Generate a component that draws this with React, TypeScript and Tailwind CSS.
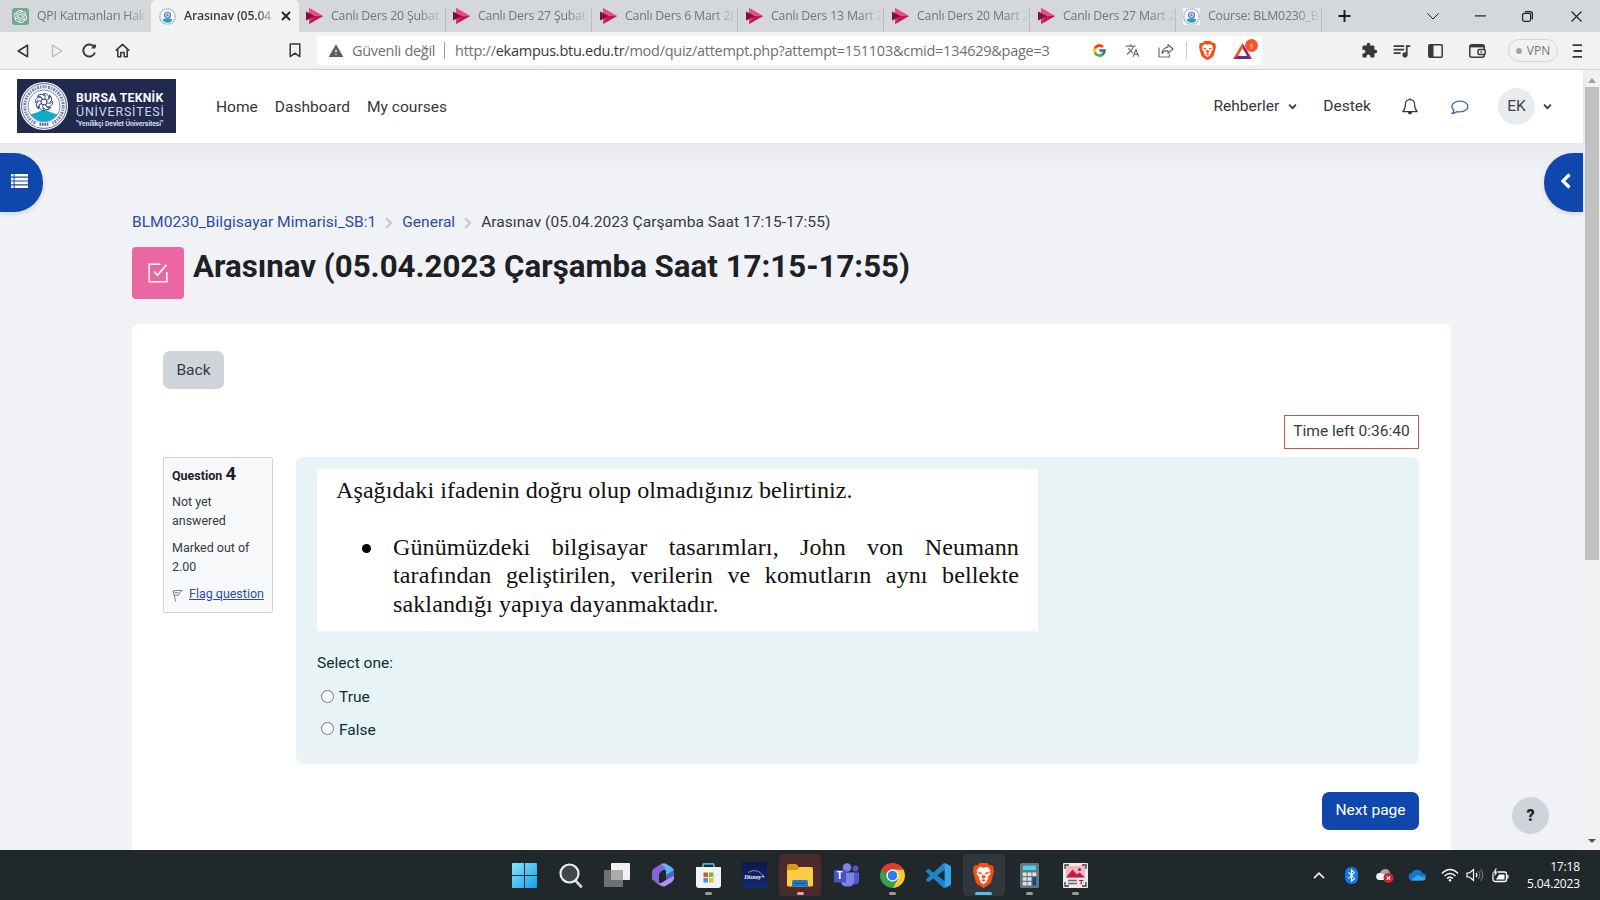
import type { ReactNode } from 'react';
import { FcGoogle } from 'react-icons/fc';
import { SiOpenai } from 'react-icons/si';
import { MdExtension, MdQueueMusic, MdTranslate, MdWarning } from 'react-icons/md';

const SHIELD =
  'M15.68 0l2.096 2.38s1.84-.512 2.709.358c.868.87 1.584 1.638 1.584 1.638l-.562 1.381.715 2.047s-2.104 7.98-2.35 8.955c-.486 1.919-.818 2.66-2.198 3.633-1.38.972-3.884 2.66-4.293 2.916-.409.256-.92.692-1.38.692-.46 0-.97-.436-1.38-.692a185.796 185.796 0 01-4.293-2.916c-1.38-.973-1.712-1.714-2.197-3.633-.247-.975-2.351-8.955-2.351-8.955l.715-2.047-.562-1.381s.716-.768 1.585-1.638c.868-.87 2.708-.358 2.708-.358L8.321 0h7.36z';

function BraveIcon({ className }: { className: string }) {
  return (
    <svg viewBox="1.8 0 20.4 24" preserveAspectRatio="none" className={className}>
      <path d={SHIELD} fill="#fb4d16" />
      <path d="M8.2 3.7 12 4.6l3.8-.9 3 3.6-.8 1.6.8 1.5-2.7 3.2.5 1.6-1.4 1.7.1 1.2-3.3 2.2-3.3-2.2.1-1.2-1.4-1.7.5-1.6-2.7-3.2.8-1.5-.8-1.6z" fill="#fff" />
      <path d="m7 8.5 3.7 1-.8 1.6-3-1.3zm10 0-3.7 1 .8 1.6 3-1.3zM11 11.5l-1.2 2.3L12 15l2.2-1.2-1.2-2.3M9.6 16.4l2.4-.9 2.4.9-2.4 1.5z" fill="#fb4d16" />
    </svg>
  );
}

function Seal({ className }: { className: string }) {
  return (
    <svg viewBox="0 0 48 48" preserveAspectRatio="none" className={className}>
      <defs>
        <clipPath id="seal-clip">
          <circle cx="24" cy="24" r="15.6" />
        </clipPath>
      </defs>
      <circle cx="24" cy="24" r="24" fill="#f6f8fc" />
      <circle cx="24" cy="24" r="22.4" fill="none" stroke="#3b4b8a" strokeWidth=".8" />
      <circle cx="24" cy="24" r="19.2" fill="none" stroke="#7380b0" strokeWidth="3" strokeDasharray="1.3 1.2 2 1" pathLength="120" strokeDashoffset="2" />
      <circle cx="24" cy="24" r="16" fill="#fff" stroke="#4f5f99" strokeWidth=".7" />
      <g clipPath="url(#seal-clip)">
        <path d="M6 33q8-1 12-3 4-2 6-2t6 2q4 2 12 3v10H6z" fill="#10a9c6" />
      </g>
      <path d="M16 40h16v5H16z" fill="#f6f8fc" />
      <path d="M19.500 42.300h9" stroke="#5161a0" strokeWidth="3" strokeDasharray="1.600 .8" />
      <g fill="none" stroke="#34468c" strokeWidth="1">
        {[0, 45, 90, 135, 180, 225, 270, 315].map((a) => (
          <path key={a} d="M24 17.600c2-1.500 1.600-4.600-.6-6.200 3.400-.4 5.600 2 5.200 5" transform={`rotate(${a} 24 20)`} />
        ))}
        <circle cx="24" cy="20" r="3" />
      </g>
    </svg>
  );
}

function SmallSeal() {
  return (
    <svg viewBox="0 0 17 17" className="h-[17px] w-[17px] shrink-0">
      <rect width="17" height="17" fill="#eef3fa" />
      <circle cx="8.5" cy="8.5" r="7.6" fill="#fff" stroke="#8fa3d0" strokeWidth="1.3" strokeDasharray="1.4 .7" />
      <circle cx="8.5" cy="7" r="3" fill="#c9d6ef" stroke="#5b7ab8" strokeWidth="1.2" />
      <circle cx="8.5" cy="7" r="1" fill="#5b7ab8" />
      <path d="M3.6 11.4q5-2.2 9.8 0-1.5 3.2-4.9 3.3-3.300-.1-4.900-3.300z" fill="#1ca5c4" />
    </svg>
  );
}

function StreamIcon() {
  return (
    <svg viewBox="0 0 17 16" className="h-4 w-[17px] shrink-0">
      <path d="M3 0 17 8 3 16z" fill="#e23a70" />
      <path d="M3 16 17 8H8z" fill="#c2184f" />
      <path d="M0 3.500 9 8l-9 4.500z" fill="#7d1238" />
      <path d="M3 0 17 8H9L3 5z" fill="#ea4c80" />
    </svg>
  );
}

function Chevron({ className }: { className: string }) {
  return (
    <svg viewBox="0 0 10 10" className={className} fill="none" stroke="currentColor" strokeWidth="2">
      <path d="m1.200 3 3.800 3.800L8.800 3" />
    </svg>
  );
}

function Crumb() {
  return (
    <svg viewBox="0 0 8 12" className="mt-px h-3 w-2 text-[#c3c8cd]" fill="none" stroke="currentColor" strokeWidth="2.200">
      <path d="m1.200 1.200 4.800 4.800-4.800 4.800" />
    </svg>
  );
}

const tabs = [
  { title: 'QPI Katmanları Hak', kind: 'chat', box: 'w-[151px] pl-3' },
  { title: 'Arasınav (05.04', kind: 'seal', box: 'w-[148px] pl-2' },
  { title: 'Canlı Ders 20 Şubat', kind: 'stream', box: 'w-[147px] pl-[7px]' },
  { title: 'Canlı Ders 27 Şubat', kind: 'stream', box: 'w-[146px] pl-[7px]' },
  { title: 'Canlı Ders 6 Mart 2(', kind: 'stream', box: 'w-[146px] pl-[8px]' },
  { title: 'Canlı Ders 13 Mart 2', kind: 'stream', box: 'w-[146px] pl-[8px]' },
  { title: 'Canlı Ders 20 Mart 2', kind: 'stream', box: 'w-[146px] pl-[8px]' },
  { title: 'Canlı Ders 27 Mart 2', kind: 'stream', box: 'w-[146px] pl-[8px]' },
  { title: 'Course: BLM0230_B', kind: 'seal', box: 'w-[146px] pl-[7px]' },
];

function TabStrip() {
  return (
    <div className="flex h-8 shrink-0 bg-[#d4d8da] text-[12.300px] tracking-[-0.200px] text-[#707578]">
      {tabs.map((t, i) => (
        <div
          key={t.title}
          className={`flex shrink-0 items-center ${t.box} ${i === 1 ? 'rounded-t-[5px] bg-[#f2f2f2] font-semibold text-[#3b3e42]' : ''}`}
        >
          {t.kind === 'chat' && (
            <span className="flex h-[17px] w-[17px] shrink-0 items-center justify-center rounded-[3px] bg-[#74a892] text-white">
              <SiOpenai className="h-[13px] w-[13px]" />
            </span>
          )}
          {t.kind === 'seal' && <SmallSeal />}
          {t.kind === 'stream' && <StreamIcon />}
          <span
            className={`ml-[8px] whitespace-nowrap ${i === 1 ? 'w-[88px] [mask-image:linear-gradient(to_right,black_72px,transparent_92px)]' : 'w-[112px] [mask-image:linear-gradient(to_right,black_88px,transparent_113px)]'}`}
          >
            {t.title}
          </span>
          {i === 1 && (
            <svg viewBox="0 0 10 10" className="ml-[9px] h-[10px] w-[10px]" stroke="#222" strokeWidth="1.800">
              <path d="m1 1 8 8M9 1 1 9" />
            </svg>
          )}
          {i > 1 && <span className="ml-auto mt-2 h-6 w-px shrink-0 bg-[#b9bec1]" />}
        </div>
      ))}
      <div className="flex flex-1 items-center text-[#1f1f1f]">
        <svg viewBox="0 0 12 12" className="ml-[16px] h-3 w-[13px]" stroke="currentColor" strokeWidth="2">
          <path d="M6 0v12M0 6h12" />
        </svg>
        <svg viewBox="0 0 12 7" className="ml-[76px] h-[7px] w-3" fill="none" stroke="currentColor">
          <path d="m.5.5 5.500 5.500L11.500.5" />
        </svg>
        <svg viewBox="0 0 11 2" className="ml-9 h-[2px] w-[11px]" fill="currentColor">
          <path d="M0 .3h11v1.200H0z" />
        </svg>
        <svg viewBox="0 0 11 11" className="ml-9 h-[11px] w-[11px]" fill="none" stroke="currentColor" strokeWidth="1.200">
          <rect x=".6" y="2.300" width="8" height="8" rx="1.500" />
          <path d="M2.800.6h5.400q2.200 0 2.200 2.200v5.400" />
        </svg>
        <svg viewBox="0 0 11 11" className="ml-[38px] h-[11px] w-[11px]" stroke="currentColor" strokeWidth="1.100">
          <path d="m.5.5 10 10M10.500.5l-10 10" />
        </svg>
      </div>
    </div>
  );
}

function Toolbar() {
  return (
    <div className="flex h-[38px] shrink-0 items-center border-b border-[#d5d7d9] bg-[#f2f2f2] text-[#36393d]">
      <svg viewBox="0 0 12 14" className="ml-[17px] h-[14px] w-3" fill="none" stroke="currentColor" strokeWidth="1.600" strokeLinejoin="round">
        <path d="M10.500 1.200v11.600L1.200 7z" />
      </svg>
      <svg viewBox="0 0 12 14" className="ml-[22px] h-[14px] w-3 text-[#b9bcbf]" fill="none" stroke="currentColor" strokeWidth="1.400" strokeLinejoin="round">
        <path d="M1.500 1.200v11.600L10.800 7z" />
      </svg>
      <svg viewBox="0 0 15 15" className="ml-[19px] h-[15px] w-[15px]" fill="none" stroke="currentColor" strokeWidth="1.900">
        <path d="M13 9.500A6 6 0 1 1 11.500 3.200" />
        <circle cx="12.500" cy="3" r="1.600" fill="currentColor" stroke="none" />
        <path d="M13.400 1v4.500H9z" fill="currentColor" stroke="none" />
      </svg>
      <svg viewBox="0 0 15 15" className="ml-[18px] h-[15px] w-[15px]" fill="none" stroke="currentColor" strokeWidth="1.600" strokeLinejoin="round">
        <path d="M.8 7.600 7.500 1.400l6.700 6.200M2.800 6.500v7.200h3V9.500h3.400v4.200h3V6.500" />
      </svg>
      <svg viewBox="0 0 12 15" className="ml-[159px] h-[15px] w-3" fill="none" stroke="currentColor" strokeWidth="1.500" strokeLinejoin="round">
        <path d="M1.200 1h9.600v12.600L6 10.200l-4.800 3.400z" />
      </svg>
      <div className="ml-4 flex h-[29px] w-[945px] shrink-0 items-center rounded-[3px] bg-white text-[14.500px] text-[#6c7073]">
        <MdWarning className="ml-[11px] h-[16px] w-[16px] text-[#5a5e62]" />
        <span className="ml-[8px] w-[83px] whitespace-nowrap tracking-[-0.300px]">Güvenli değil</span>
        <span className="ml-[9px] h-[17px] w-px bg-[#999]" />
        <span className="ml-[10px] w-[600px] whitespace-nowrap tracking-[-0.260px]">
          http://<span className="text-[#37393c]">ekampus.btu.edu.tr</span>/mod/quiz/attempt.php?attempt=151103&amp;cmid=134629&amp;page=3
        </span>
        <FcGoogle className="ml-[37px] h-[15px] w-[15px]" />
        <MdTranslate className="ml-[18px] h-[15px] w-[15px]" />
        <svg viewBox="0 0 16 15" className="ml-[18px] h-[15px] w-4" fill="none" stroke="currentColor" strokeWidth="1.200" strokeLinejoin="round">
          <path d="M1 4.500v9.500h10.500v-3" />
          <path d="M10 1.500 15 6l-5 4.300V7.700Q5.800 7.500 4 10.500q.3-5.600 6-6.400z" />
        </svg>
        <span className="ml-[12px] h-[17px] w-px bg-[#ccc]" />
        <BraveIcon className="ml-[12px] h-[19px] w-[17px]" />
        <span className="relative ml-[17px] h-[19px] w-6">
          <svg viewBox="0 0 19 16" className="h-[18px] w-[19px] pt-[2px]">
            <path d="M9.500 0 0 16h5.500l4-10z" fill="#ff4b12" />
            <path d="M9.500 0 19 16l-5.500-3.300L9.500 6z" fill="#9e1f63" />
            <path d="M0 16h19l-4.500-3.300h-9z" fill="#662d91" />
            <path d="m9.500 5.300 4.500 7.500H5z" fill="#fff" />
          </svg>
          <span className="absolute -top-[2px] left-[12px] flex h-[13px] w-[13px] items-center justify-center rounded-full bg-[#fb542b] text-[8px] leading-none text-white">1</span>
        </span>
      </div>
      <MdExtension className="ml-[99px] h-[17px] w-[17px]" />
      <MdQueueMusic className="ml-[13px] h-[21px] w-[21px]" />
      <svg viewBox="0 0 15 14" className="ml-[16px] h-[14px] w-[15px]">
        <rect x=".8" y=".8" width="13.400" height="12.400" rx="1" fill="none" stroke="currentColor" strokeWidth="1.500" />
        <path d="M1 1h4.500v12H1z" fill="currentColor" />
      </svg>
      <svg viewBox="0 0 17 14" className="ml-[26px] h-[14px] w-[17px]" fill="none" stroke="currentColor" strokeWidth="1.500">
        <rect x=".8" y=".8" width="14.500" height="12.400" rx="2" />
        <path d="M1 2.200h14" strokeWidth="2.400" />
        <rect x="9" y="5.500" width="7.200" height="5" rx="1.500" fill="#f2f2f2" />
        <path d="M11.500 8h1.500" />
      </svg>
      <span className="ml-[22px] flex h-[23px] w-[50px] items-center justify-center gap-[5px] rounded-full border border-[#d3d5d8] text-[12px] text-[#73777b]">
        <span className="h-[6px] w-[6px] rounded-full bg-[#a0a3b5]" />
        VPN
      </span>
      <svg viewBox="0 0 10 14" className="ml-[14px] h-[14px] w-[10px]" fill="none" stroke="currentColor" strokeWidth="1.800">
        <path d="M.5 1.200H10M1.500 7H10M.5 12.800H10" />
      </svg>
    </div>
  );
}

function SiteNav() {
  return (
    <header className="flex h-[73px] shrink-0 items-start bg-white pl-[17px] text-[15.550px] leading-[24px] text-[#33383d] shadow-[0_2px_8px_rgba(0,0,0,0.080)]">
      <div className="mt-[9px] flex h-[54px] w-[159px] items-start bg-[#21294f]">
        <Seal className="ml-[3px] mt-[3px] h-[48px] w-[48px] shrink-0" />
        <div className="ml-[8px] mt-[13px] flex flex-col whitespace-nowrap text-white">
          <span className="text-[12.200px] font-bold leading-[13px] tracking-[0.280px]">BURSA TEKNİK</span>
          <span className="text-[12.400px] leading-[13px] tracking-[0.850px] text-[#cfd6ea]">ÜNİVERSİTESİ</span>
          <span className="mt-px text-[6.800px] font-bold leading-[10px] tracking-[-0.060px] text-[#d8ddec]">"Yenilikçi Devlet Üniversitesi"</span>
        </div>
      </div>
      <nav className="ml-10 mt-[24.500px] flex gap-[17px]">
        <span>Home</span>
        <span>Dashboard</span>
        <span>My courses</span>
      </nav>
      <div className="ml-auto mr-[31px] flex h-[72px] items-center">
        <span>Rehberler</span>
        <Chevron className="ml-[9px] h-[9px] w-[9px]" />
        <span className="ml-[26px]">Destek</span>
        <svg viewBox="0 0 16 17" className="ml-[31px] h-[17px] w-4" fill="none" stroke="currentColor" strokeWidth="1.200" strokeLinejoin="round">
          <path d="M8 1.600c-3 0-4.600 2-4.600 4.800 0 4-1 5.600-2.600 7.200h14.400c-1.600-1.600-2.600-3.200-2.600-7.200 0-2.800-1.600-4.800-4.600-4.800zM8 .2v1.600" />
          <path d="M6.500 14.300a1.500 1.500 0 0 0 3 0z" fill="currentColor" />
        </svg>
        <svg viewBox="1 0 17 15.500" preserveAspectRatio="none" className="ml-[33px] mt-[2px] h-[15px] w-[18px] text-[#3a66bf]" fill="none" stroke="currentColor" strokeWidth="1.300" strokeLinejoin="round">
          <path d="M9.500 1.200c4.300 0 7.500 2.300 7.500 5.500s-3.200 5.500-7.500 5.500c-1 0-1.800-.1-2.600-.3-1.500 1.400-3 2-5 2.200 1.200-1 1.700-2 1.800-3.400C2.500 9.700 1.800 8.300 1.800 6.700c0-3.200 3.400-5.500 7.700-5.500z" />
        </svg>
        <span className="ml-[29px] flex h-[37px] w-[37px] items-center justify-center rounded-full bg-[#e9ecef] text-[#3f454b]">EK</span>
        <Chevron className="ml-[8px] h-[9px] w-[9px]" />
      </div>
    </header>
  );
}

function QuestionInfo() {
  return (
    <div className="flex h-[156px] w-[110px] shrink-0 flex-col rounded-[2px] border border-[#ced4da] bg-[#f8f9fb] pl-2 pt-[4px] text-[12.480px] text-[#343a40]">
      <h3 className="whitespace-nowrap text-[12.480px] font-bold leading-[24px] text-[#1d2125]">
        Question <span className="text-[18.500px]">4</span>
      </h3>
      <p className="mt-[4px] leading-[19px]">Not yet<br />answered</p>
      <p className="mt-[9px] leading-[18.500px]">Marked out of<br />2.00</p>
      <p className="mt-[8px] flex items-center whitespace-nowrap leading-[19px]">
        <svg viewBox="0 0 11 13" className="mt-[3px] h-[13px] w-[11px]" fill="none" stroke="#777c80">
          <path d="m1 2 2.700 10.500M1 2q4-1 9-.5Q7.500 3.500 6.300 6.300 4 5.800 2.400 6.500M2.500 3.800l4-.300" />
        </svg>
        <a className="ml-[6px] text-[#2a4ba5] underline">Flag question</a>
      </p>
    </div>
  );
}

function Radio({ label }: { label: string }) {
  return (
    <label className="flex h-[32.600px] items-start">
      <span className="mt-[4.500px] h-[13px] w-[13px] rounded-full border border-[#767676] bg-white" />
      <span className="ml-[5px] leading-[24px]">{label}</span>
    </label>
  );
}

function QuestionBody() {
  return (
    <div className="ml-[23px] flex h-[307px] flex-1 flex-col rounded-[7px] bg-[#e7f3f5] pl-[21px] pt-3 text-[#0f2d33]">
      <div className="h-[162px] w-[721px] bg-white pl-[19px] pt-[6.500px] font-['Liberation_Serif',serif] text-[24.100px] text-[#111]">
        <p className="whitespace-nowrap leading-[28px] tracking-[0.050px]">Aşağıdaki ifadenin doğru olup olmadığınız belirtiniz.</p>
        <div className="mt-[29px] flex">
          <span className="ml-[26px] mt-[11px] h-[9px] w-[9px] shrink-0 rounded-full bg-black" />
          <div className="ml-[22px] w-[626px] leading-[28px] tracking-[0.080px]">
            <p className="h-[28px] whitespace-nowrap [text-align-last:justify]">Günümüzdeki bilgisayar tasarımları, John von Neumann</p>
            <p className="h-[29px] whitespace-nowrap [text-align-last:justify]">tarafından geliştirilen, verilerin ve komutların aynı bellekte</p>
            <p className="h-[28px] whitespace-nowrap">saklandığı yapıya dayanmaktadır.</p>
          </div>
        </div>
      </div>
      <p className="mt-[20px] leading-[24px]">Select one:</p>
      <div className="ml-[4px] mt-[10px] flex flex-col">
        <Radio label="True" />
        <Radio label="False" />
      </div>
    </div>
  );
}

function Page() {
  return (
    <main className="flex min-h-0 flex-1 flex-col overflow-hidden bg-[linear-gradient(#e9eaee,#f0f2f6_32px)] pl-[132px] pr-[132px] text-[15.550px]">
      <div className="mt-[67px] flex h-6 items-center whitespace-nowrap leading-6 text-[#2a4ba5]">
        <a className="tracking-[0.030px]">BLM0230_Bilgisayar Mimarisi_SB:1</a>
        <span className="ml-[9px] mr-[9px]"><Crumb /></span>
        <a>General</a>
        <span className="ml-[9px] mr-[9px]"><Crumb /></span>
        <span className="tracking-[0.020px] text-[#343a40]">Arasınav (05.04.2023 Çarşamba Saat 17:15-17:55)</span>
      </div>
      <div className="mt-[13px] flex h-[52px]">
        <span className="flex h-[52px] w-[52px] items-center justify-center rounded-[4px] bg-[#eb66a2]">
          <svg viewBox="0 0 20 20" className="h-5 w-5" fill="none" stroke="#fff" strokeWidth="1.500">
            <path d="M12.500 1.200H1.200v17.600h17.600V9" />
            <path d="m6 8.500 3.500 3.800 9-10.500" strokeWidth="1.700" />
          </svg>
        </span>
        <h1 className="ml-[9px] whitespace-nowrap text-[31.250px] font-bold leading-[39px] text-[#1d2125]">
          Arasınav (05.04.2023 Çarşamba Saat 17:15-17:55)
        </h1>
      </div>
      <section className="mt-[25px] flex flex-1 flex-col rounded-t-[7px] bg-white px-8 pl-[31px] pt-[27px] text-[#343a40]">
        <button className="h-[38px] w-[61px] rounded-[7px] bg-[#ced4da] pt-px">Back</button>
        <div className="mt-[26px] flex h-[34px] w-[135px] items-center justify-center self-end whitespace-nowrap border border-[#b8483c]/90">
          Time left 0:36:40
        </div>
        <div className="mt-[8px] flex">
          <QuestionInfo />
          <QuestionBody />
        </div>
        <button className="mt-[28px] h-[38px] w-[97px] self-end whitespace-nowrap rounded-[7px] bg-[#0f47ad] text-white">Next page</button>
      </section>
    </main>
  );
}

function Scrollbar() {
  return (
    <div className="flex w-[17px] shrink-0 flex-col items-center bg-[#f1f1f1] text-[#505050]">
      <svg viewBox="0 0 8 5" className="mt-[8px] h-[5px] w-2"><path d="M0 5 4 0l4 5z" fill="#a3a3a3" /></svg>
      <div className="mt-[4px] h-[473px] w-[14px] bg-[#c1c1c1]" />
      <svg viewBox="0 0 8 4" className="mb-[7px] mt-auto h-1 w-2"><path d="m0 0 4 4 4-4z" fill="currentColor" /></svg>
    </div>
  );
}

function Slot({ children, dot, box }: { children: ReactNode; dot?: string; box?: string }) {
  return (
    <div className={`relative flex h-[42px] w-[42px] shrink-0 items-center justify-center rounded-[4px] ${box ?? ''}`}>
      {children}
      {dot && <span className={`absolute bottom-[1px] h-[3px] rounded-full ${dot}`} />}
    </div>
  );
}

const GREY = 'w-[7px] bg-[#9a9c9d]';

function Taskbar() {
  return (
    <footer className="flex h-[50px] shrink-0 items-start bg-[#20282b] pl-[504px] pt-1 text-white">
      <div className="flex gap-[3.900px]">
        <Slot>
          <svg viewBox="0 0 25 25" className="mr-[2px] h-[25px] w-[25px]">
            <defs>
              <linearGradient id="win" x1="0" y1="0" x2="1" y2="1"><stop stopColor="#8ae4ff" /><stop offset="1" stopColor="#139fe8" /></linearGradient>
            </defs>
            <path d="M1 0h11v12H0V1q0-1 1-1zM13 0h11q1 0 1 1v11H13zM0 13h12v12H1q-1 0-1-1zM13 13h12v11q0 1-1 1H13z" fill="url(#win)" />
          </svg>
        </Slot>
        <Slot>
          <svg viewBox="0 0 24 25" className="h-[25px] w-6">
            <path d="m15.500 16.500 6.500 7" stroke="#d0d1d2" strokeWidth="2.800" strokeLinecap="round" />
            <circle cx="10.500" cy="10.500" r="9" fill="#434648" stroke="#eee" strokeWidth="2.200" />
          </svg>
        </Slot>
        <Slot>
          <svg viewBox="0 0 26 24" className="h-6 w-[26px]">
            <rect x="7" width="19" height="17" rx="1" fill="#f1f1f1" />
            <rect y="7" width="19" height="17" rx="1" fill="#6e7072" />
            <path d="M7 7h12v10H7z" fill="#a9abac" />
          </svg>
        </Slot>
        <Slot>
          <svg viewBox="0 0 24 25" className="h-[25px] w-6">
            <path d="M10 1q3-1.500 5.500 0L21 4.500q2 1.300 2 3.500v8.500L15 12V7.500L10.500 5z" fill="#5fb6ef" />
            <path d="M10 1 3 5.500Q1 7 1 9.500v7L8 21v-9q0-2 2-3.500l5-3z" fill="#8566d8" />
            <path d="m3 18.500 6.500 4q3 1.800 6 0l5.500-3.500q2-1.500 2-4v-3.500L15 17l-4 2.500q-3 1.500-5.500 0z" fill="#b98af0" />
            <path d="M15 12v5l8-4V7z" fill="#4464c9" />
          </svg>
        </Slot>
        <Slot dot={GREY}>
          <svg viewBox="0 0 25 25" className="h-[25px] w-[25px]">
            <path d="M7 5V2q0-1.200 1.200-1.200h8.600Q18 .800 18 2v3" fill="none" stroke="#3cb5e5" strokeWidth="1.700" />
            <path d="M0 4h25v18q0 3-3 3H3q-3 0-3-3z" fill="#f2f3f4" />
            <path d="M7.500 9.500h4.500V14H7.500z" fill="#e5532d" /><path d="M13 9.500h4.500V14H13z" fill="#7cb832" />
            <path d="M7.500 15h4.500v4.500H7.500z" fill="#2a9fe0" /><path d="M13 15h4.500v4.500H13z" fill="#f7b820" />
          </svg>
        </Slot>
        <Slot>
          <span className="relative flex h-[26px] w-[25px] items-center justify-center bg-[linear-gradient(#0c1849,#112a70)]">
            <svg viewBox="0 0 25 26" className="absolute h-[26px] w-[25px]" fill="none" stroke="#8fb7ee" strokeWidth=".8"><path d="M6 10.500q9-5 15 3" /></svg>
            <span className="mt-[3px] font-['Liberation_Serif',serif] text-[6px] font-bold italic leading-none text-white">Disney+</span>
          </span>
        </Slot>
        <Slot box="bg-[#4b2a2b]" dot="w-[7px] bg-[#f79aa0]">
          <svg viewBox="0 0 26 23" className="h-[23px] w-[26px]">
            <path d="M0 2q0-2 2-2h7l3 3h12v6H0z" fill="#d9970f" />
            <path d="M0 7q0-1 1-1h9l3-3h11q2 0 2 2v16q0 1.500-1.500 1.500h-23Q0 22.500 0 21z" fill="#fccb45" />
            <path d="M5 22.500V18q0-2 2-2h12q2 0 2 2v4.500z" fill="#1d77c5" />
            <path d="M8 19.500h10" stroke="#125b9d" />
          </svg>
        </Slot>
        <Slot>
          <svg viewBox="0 0 25 25" className="h-[25px] w-[25px]">
            <circle cx="13" cy="4.500" r="4.300" fill="#7b83eb" /><circle cx="21.500" cy="5.500" r="2.900" fill="#5059c9" />
            <path d="M17 9.500h8v8q0 4-4 4-3 0-4-3z" fill="#5059c9" />
            <path d="M7 9.500h13v8.500q0 5.500-6.500 5.500T7 18z" fill="#7b83eb" />
            <rect y="7" width="12" height="12.500" rx="1" fill="#4b53bc" />
          </svg>
          <span className="absolute left-[11.500px] top-[16px] text-[10px] font-bold leading-none">T</span>
        </Slot>
        <Slot dot={GREY}>
          <svg viewBox="0 0 24 24" className="h-[25px] w-[25px]">
            <path d="M12 12V6h10.390A12 12 0 0 1 12 24l5.200-9z" fill="#fcc934" />
            <path d="m12 12-5.200 3L1.610 6A12 12 0 0 0 12 24l5.200-9z" fill="#34a350" />
            <path d="M1.610 6 6.800 15 12 12V6z" fill="#34a350" />
            <path d="M1.610 6A12 12 0 0 1 22.390 6H12a6 6 0 0 0-5.200 3z" fill="#e33b2e" />
            <path d="M1.610 6 6.800 15A6 6 0 0 1 12 6z" fill="#34a350" />
            <path d="M1.610 6A12 12 0 0 1 22.390 6H12a6 6 0 0 0-6 5z" fill="#e33b2e" />
            <circle cx="12" cy="12" r="5.900" fill="#fff" /><circle cx="12" cy="12" r="4.600" fill="#2f7de9" />
          </svg>
        </Slot>
        <Slot>
          <svg viewBox="0 0 24 24" className="h-[25px] w-[25px]">
            <path d="M23.150 2.587 18.210.21a1.494 1.494 0 0 0-1.705.29l-9.460 8.630-4.120-3.128a.999.999 0 0 0-1.276.057L.327 7.261A1 1 0 0 0 .326 8.740L3.899 12 .326 15.260a1 1 0 0 0 .001 1.479L1.650 17.940a.999.999 0 0 0 1.276.057l4.120-3.128 9.460 8.630a1.492 1.492 0 0 0 1.704.29l4.942-2.377A1.500 1.500 0 0 0 24 20.060V3.939a1.500 1.500 0 0 0-.85-1.352zm-5.146 14.861L10.826 12l7.178-5.448v10.896z" fill="#1b86cc" />
            <path d="M18 .2 23.150 2.587Q24 3 24 3.939V20.060q0 .9-.85 1.352L18 23.800z" fill="#32a5ed" />
          </svg>
        </Slot>
        <Slot box="bg-[#30383c]" dot="w-[17px] bg-[#5fb8ec]">
          <BraveIcon className="h-[25px] w-[21px]" />
        </Slot>
        <Slot dot={GREY}>
          <svg viewBox="0 0 19 25" className="h-[25px] w-[19px]">
            <rect width="19" height="25" rx="1.500" fill="#69757e" />
            <path d="M3 2.500h13v4.500H3z" fill="#4dd0f5" />
            <path d="M2.800 9.500h3.800v3.500H2.800zM7.600 9.500h3.800v3.500H7.600zM12.400 9.500h3.800v3.500h-3.800zM2.800 14.200h3.800v3.500H2.800zM7.600 14.200h3.800v3.500H7.600zM2.800 19h3.800v3.500H2.800zM7.600 19h3.800v3.500H7.600z" fill="#e1e5e8" />
            <path d="M12.400 14.200h3.800v8.300h-3.800z" fill="#0f4c8a" />
          </svg>
        </Slot>
        <Slot dot={GREY}>
          <svg viewBox="0 0 25 25" className="h-[25px] w-[25px]">
            <rect width="25" height="25" rx="1" fill="#eceaea" />
            <path d="M3 3h19v11.500H3z" fill="#f5b5c0" />
            <path d="m3 14.500 6.500-8 4.500 5 2.500-2 5.500 5z" fill="#c9183f" /><circle cx="16.500" cy="6.500" r="1.600" fill="#c9183f" />
            <path d="M2 6V2h4M19 2h4v4M2 19v4h4M19 23h4v-4" fill="none" stroke="#3b3b3b" strokeWidth="1.300" />
            <path d="M5 17.500h9M5 20.500h9" stroke="#6d6d6d" strokeWidth="1.300" />
            <path d="M16 17.500h4.500M18.200 17.500v4" stroke="#c9183f" strokeWidth="1.200" />
          </svg>
        </Slot>
      </div>
      <div className="ml-auto mr-5 flex h-[42px] items-center">
        <svg viewBox="0 0 12 7" className="h-[7px] w-3" fill="none" stroke="#eee" strokeWidth="1.700"><path d="m1 6.200 5-5 5 5" /></svg>
        <svg viewBox="0 0 13 17" className="ml-5 h-[17px] w-[13px]">
          <rect width="13" height="17" rx="6" fill="#0a7cf0" />
          <path d="m3.500 5.200 6 6.400L6.500 14V3l3 2.500-6 6.200" fill="none" stroke="#fff" strokeWidth="1.100" />
        </svg>
        <svg viewBox="0 0 18 14" className="ml-[18px] mt-[2px] h-[14px] w-[18px]">
          <path d="M4 11a3.500 3.500 0 0 1 0-7q1.500-4 5.500-4Q13 0 14 4l1 7z" fill="#a4a6a8" />
          <path d="M3.500 11A3.500 3.500 0 0 1 4 4q3-.5 5.500 2.500L15 8v3z" fill="#f2f2f2" />
          <circle cx="12.500" cy="9" r="5" fill="#cf2530" />
          <path d="m10.800 7.300 3.400 3.400M14.200 7.300l-3.400 3.400" stroke="#fff" strokeWidth="1.200" />
        </svg>
        <svg viewBox="0 0 18 12" className="ml-[14px] h-[12px] w-[18px]">
          <path d="M4 11.500A3.800 3.800 0 0 1 3.800 4 5.800 5.800 0 0 1 14.500 4.500q3.500.4 3.500 3.500T14.500 11.500z" fill="#0f78cf" />
          <path d="m3 11.300 6.500-5.200L17.500 9q-.6 2.500-3.500 2.500H4z" fill="#35a8ec" />
        </svg>
        <svg viewBox="0 0 18 14" className="ml-[15px] h-[14px] w-[18px]" fill="none" stroke="#fff" strokeWidth="1.400">
          <path d="M1 5.500q8-8 16 0M3.500 8q5.500-5 11 0M6 10.500q3-2.500 6 0" /><circle cx="9" cy="12.300" r="1.200" fill="#fff" stroke="none" />
        </svg>
        <svg viewBox="0 0 18 14" className="ml-[7px] h-[14px] w-[18px]" fill="none" stroke="#fff" strokeWidth="1.200">
          <path d="M1 5h2.500L7.500 1.500v11L3.500 9H1zM10 4.800q1.800 2.200 0 4.400" />
          <path d="M12.300 3q3 4 0 8M14.500 1.300q4.500 5.700 0 11.400" stroke="#6c7173" />
        </svg>
        <svg viewBox="0 0 17 15" className="ml-[8px] h-[15px] w-[17px]" fill="none" stroke="#fff" strokeWidth="1.300">
          <rect x="1" y="4" width="13.500" height="9.500" rx="2" /><path d="M15.800 7v3.500" />
          <path d="M7 6.500h5.500v5H4z" fill="#fff" stroke="none" />
          <path d="M3.500 0 .8 5.500h2L2 9.500l4-5.500H4L5 0z" fill="#fff" stroke="#20282b" strokeWidth=".6" />
        </svg>
        <div className="ml-[18px] w-[53px] whitespace-nowrap text-right text-[12px] leading-[17px] tracking-[-0.150px]">
          17:18<br />5.04.2023
        </div>
      </div>
    </footer>
  );
}

export default function App() {
  return (
    <div className="flex h-[900px] w-[1600px] flex-col overflow-hidden bg-white font-['Open_Sans',sans-serif]">
      <TabStrip />
      <Toolbar />
      <div className="flex h-[780px] shrink-0 font-[Roboto,sans-serif]">
        <div className="relative flex min-w-0 flex-1 flex-col">
          <SiteNav />
          <Page />
          <button className="absolute left-0 top-[83px] flex h-[59px] w-[43px] items-start rounded-r-[29px] bg-[#0f47ad] pl-[11px] pt-[21px] shadow-[0_2px_5px_rgba(0,0,0,0.120)]">
            <svg viewBox="0 0 17 14" className="h-[14px] w-[17px]" fill="#fff">
              <path d="M0 0h2.600v2.600H0zM3.600 0H17v2.600H3.600zM0 3.800h2.600v2.600H0zM3.600 3.800H17v2.600H3.600zM0 7.600h2.600v2.600H0zM3.600 7.600H17v2.600H3.600zM0 11.400h2.600V14H0zM3.600 11.400H17V14H3.600z" />
            </svg>
          </button>
          <button className="absolute right-0 top-[83px] flex h-[59px] w-[39px] items-start rounded-l-[29px] bg-[#0f47ad] pl-[16px] pt-[20px] shadow-[0_2px_5px_rgba(0,0,0,0.120)]">
            <svg viewBox="0 0 11 16" className="h-4 w-[11px]" fill="none" stroke="#fff" strokeWidth="3.200"><path d="M9.500 1.500 3 8l6.500 6.500" /></svg>
          </button>
          <button className="absolute right-[34px] top-[727px] h-[37px] w-[37px] rounded-full bg-[#ced4da] text-[16px] font-black text-[#1d2125]">?</button>
        </div>
        <Scrollbar />
      </div>
      <Taskbar />
    </div>
  );
}
